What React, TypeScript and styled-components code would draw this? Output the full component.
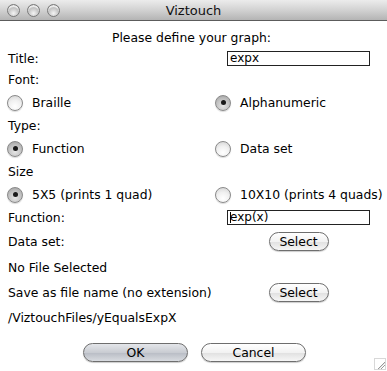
import React from "react";
import styled, { createGlobalStyle } from "styled-components";

const Global = createGlobalStyle`
  html, body { margin: 0; padding: 0; background: #ffffff; }
  body { font-family: "DejaVu Sans", "Liberation Sans", sans-serif; font-size: 12.4px; color: #000; }
`;

const Window = styled.div`
  width: 387px;
  height: 371px;
  position: relative;
  background: #ffffff;
  overflow: hidden;
`;

const TitleBar = styled.div`
  height: 21px;
  box-sizing: border-box;
  border-bottom: 1px solid #5c5c5c;
  background: linear-gradient(#ececec, #d2d2d2 50%, #b4b4b4);
  display: flex;
  align-items: center;
  position: relative;
`;

const Lights = styled.div`
  display: flex;
  gap: 7px;
  padding-left: 7px;
`;

const Light = styled.span`
  width: 13px;
  height: 13px;
  border-radius: 50%;
  box-sizing: border-box;
  border: 1px solid #7a7a7a;
  background: radial-gradient(circle at 50% 75%, #f4f4f4 0%, #c9c9c9 45%, #8e8e8e 100%);
  box-shadow: inset 0 2px 1px rgba(255,255,255,0.8);
`;

const WindowTitle = styled.div`
  position: absolute;
  left: 0;
  right: 0;
  text-align: center;
  font-size: 13px;
  color: #111;
  pointer-events: none;
`;

const Form = styled.div`
  display: grid;
  grid-template-columns: 208px 165px;
  padding: 5px 6px 0 8px;
`;

const Heading = styled.div`
  grid-column: 1 / -1;
  height: 22px;
  display: flex;
  align-items: center;
  justify-content: center;
  padding-right: 6px;
`;

const Cell = styled.div<{ $h: number; $center?: boolean; $span?: boolean }>`
  height: ${(p) => p.$h}px;
  display: flex;
  align-items: center;
  justify-content: ${(p) => (p.$center ? "center" : "flex-start")};
  grid-column: ${(p) => (p.$span ? "1 / -1" : "auto")};
  white-space: nowrap;
`;

const RadioLabel = styled.label`
  display: flex;
  align-items: center;
  gap: 9px;
  margin-left: -1px;
`;

const RadioDot = styled.span<{ $on?: boolean }>`
  width: 16px;
  height: 16px;
  box-sizing: border-box;
  border-radius: 50%;
  border: 1px solid #8a8a8a;
  background: ${(p) =>
    p.$on
      ? "radial-gradient(circle at 50% 70%, #e6e6e6 0%, #bdbdbd 60%, #9a9a9a 100%)"
      : "radial-gradient(circle at 50% 75%, #ffffff 0%, #f0f0f0 50%, #cfcfcf 100%)"};
  box-shadow: 0 1px 1px rgba(0,0,0,0.15);
  display: flex;
  align-items: center;
  justify-content: center;
  &::after {
    content: "";
    display: ${(p) => (p.$on ? "block" : "none")};
    width: 5px;
    height: 5px;
    border-radius: 50%;
    background: #1a1a1a;
  }
`;

const TextBox = styled.div`
  width: 143px;
  height: 15px;
  box-sizing: border-box;
  border: 1px solid #222;
  background: #fff;
  font-size: 12px;
  line-height: 13px;
  padding-left: 2px;
  display: flex;
  align-items: center;
`;

const Caret = styled.span`
  width: 1px;
  height: 11px;
  background: #000;
  margin-right: -1px;
`;

const PillButton = styled.button<{ $w: number; $tint?: boolean }>`
  width: ${(p) => p.$w}px;
  height: 19px;
  border-radius: 10px;
  border: 1px solid #6e6e6e;
  background: ${(p) =>
    p.$tint
      ? "linear-gradient(#e4e6ea, #c9ccd2 50%, #b8bcc4 51%, #d8dbe0)"
      : "linear-gradient(#ffffff, #f2f2f2 50%, #e0e0e0 51%, #f6f6f6)"};
  box-shadow: 0 1px 1px rgba(0,0,0,0.2);
  font-family: "DejaVu Sans", "Liberation Sans", sans-serif;
  font-size: 12.4px;
  color: #000;
  padding: 0;
  line-height: 17px;
`;

const ButtonBar = styled.div`
  grid-column: 1 / -1;
  display: flex;
  gap: 13px;
  padding-top: 13px;
  padding-left: 75px;
`;

const Grip = styled.svg`
  position: absolute;
  right: 1px;
  bottom: 1px;
`;

export default function App() {
  return (
    <>
      <Global />
      <Window>
        <TitleBar>
          <Lights>
            <Light />
            <Light />
            <Light />
          </Lights>
          <WindowTitle>Viztouch</WindowTitle>
        </TitleBar>
        <Form>
          <Heading>Please define your graph:</Heading>

          <Cell $h={20}>Title:</Cell>
          <Cell $h={20} $center>
            <TextBox>expx</TextBox>
          </Cell>

          <Cell $h={23} $span>Font:</Cell>

          <Cell $h={23}>
            <RadioLabel><RadioDot />Braille</RadioLabel>
          </Cell>
          <Cell $h={23}>
            <RadioLabel><RadioDot $on />Alphanumeric</RadioLabel>
          </Cell>

          <Cell $h={23} $span>Type:</Cell>

          <Cell $h={23}>
            <RadioLabel><RadioDot $on />Function</RadioLabel>
          </Cell>
          <Cell $h={23}>
            <RadioLabel><RadioDot />Data set</RadioLabel>
          </Cell>

          <Cell $h={23} $span>Size</Cell>

          <Cell $h={23}>
            <RadioLabel><RadioDot $on />5X5 (prints 1 quad)</RadioLabel>
          </Cell>
          <Cell $h={23}>
            <RadioLabel><RadioDot />10X10 (prints 4 quads)</RadioLabel>
          </Cell>

          <Cell $h={23}>Function:</Cell>
          <Cell $h={23} $center>
            <TextBox><Caret />exp(x)</TextBox>
          </Cell>

          <Cell $h={25}>Data set:</Cell>
          <Cell $h={25} $center>
            <PillButton $w={60}>Select</PillButton>
          </Cell>

          <Cell $h={26} $span>No File Selected</Cell>

          <Cell $h={25}>Save as file name (no extension)</Cell>
          <Cell $h={25} $center>
            <PillButton $w={60}>Select</PillButton>
          </Cell>

          <Cell $h={25} $span>/ViztouchFiles/yEqualsExpX</Cell>

          <ButtonBar>
            <PillButton $w={105} $tint>OK</PillButton>
            <PillButton $w={105}>Cancel</PillButton>
          </ButtonBar>
        </Form>
        <Grip width="12" height="12" viewBox="0 0 12 12">
          <rect x="0.5" y="0.5" width="11" height="11" fill="#fff" stroke="#d8d8d8" />
          <line x1="4" y1="11" x2="11" y2="4" stroke="#9a9a9a" />
          <line x1="7" y1="11" x2="11" y2="7" stroke="#9a9a9a" />
          <line x1="5" y1="11" x2="11" y2="5" stroke="#e0e0e0" />
        </Grip>
      </Window>
    </>
  );
}
